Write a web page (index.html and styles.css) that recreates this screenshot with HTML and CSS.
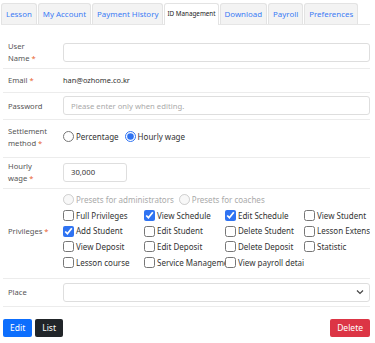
FILE: index.html
```html
<!DOCTYPE html>
<html lang="en">
<head>
    <meta charset="UTF-8">
    <meta name="viewport" content="width=device-width, initial-scale=1.0">
    <title>ID Management</title>
    <link rel="stylesheet" href="styles.css">
</head>
<body>
    <div class="page">
        <!-- tabs -->
        <ul class="tabs">
            <li class="tab"><a href="#">Lesson</a></li>
            <li class="tab"><a href="#">My Account</a></li>
            <li class="tab"><a href="#">Payment History</a></li>
            <li class="tab active"><a href="#">ID Management</a></li>
            <li class="tab"><a href="#">Download</a></li>
            <li class="tab"><a href="#">Payroll</a></li>
            <li class="tab"><a href="#">Preferences</a></li>
        </ul>

        <!-- form -->
        <form class="form">
            <div class="row row-name">
                <label class="label">User Name&nbsp;<span class="req">*</span></label>
                <div class="field"><input class="input" type="text"></div>
            </div>
            <div class="row row-email">
                <label class="label">Email&nbsp;<span class="req">*</span></label>
                <div class="field email">han@ozhome.co.kr</div>
            </div>
            <div class="row row-pass">
                <label class="label">Password</label>
                <div class="field"><input class="input" type="password" placeholder="Please enter only when editing."></div>
            </div>
            <div class="row row-settle">
                <label class="label">Settlement method&nbsp;<span class="req">*</span></label>
                <div class="field radios">
                    <label class="opt"><input type="radio" name="settle"> Percentage</label>
                    <label class="opt"><input type="radio" name="settle" checked> Hourly wage</label>
                </div>
            </div>
            <div class="row row-wage">
                <label class="label">Hourly wage&nbsp;<span class="req">*</span></label>
                <div class="field"><input class="input input-short" type="text" value="30,000"></div>
            </div>
            <div class="row row-priv">
                <label class="label">Privileges&nbsp;<span class="req">*</span></label>
                <div class="field">
                    <div class="presets">
                        <label class="opt"><input type="radio" disabled> Presets for administrators</label>
                        <label class="opt"><input type="radio" disabled> Presets for coaches</label>
                    </div>
                    <div class="checks">
                        <label class="opt"><input type="checkbox"> Full Privileges</label>
                        <label class="opt"><input type="checkbox" checked> View Schedule</label>
                        <label class="opt"><input type="checkbox" checked> Edit Schedule</label>
                        <label class="opt"><input type="checkbox"> View Student</label>
                        <label class="opt"><input type="checkbox" checked> Add Student</label>
                        <label class="opt"><input type="checkbox"> Edit Student</label>
                        <label class="opt"><input type="checkbox"> Delete Student</label>
                        <label class="opt"><input type="checkbox"> Lesson Extension</label>
                        <label class="opt"><input type="checkbox"> View Deposit</label>
                        <label class="opt"><input type="checkbox"> Edit Deposit</label>
                        <label class="opt"><input type="checkbox"> Delete Deposit</label>
                        <label class="opt"><input type="checkbox"> Statistic</label>
                        <label class="opt"><input type="checkbox"> Lesson course</label>
                        <label class="opt"><input type="checkbox"> Service Management</label>
                        <label class="opt"><input type="checkbox"> View payroll details</label>
                    </div>
                </div>
            </div>
            <div class="row row-place">
                <label class="label">Place</label>
                <div class="field">
                    <select class="input select"><option></option></select>
                </div>
            </div>

            <div class="actions">
                <button type="button" class="btn btn-blue">Edit</button>
                <button type="button" class="btn btn-dark">List</button>
                <button type="button" class="btn btn-red right">Delete</button>
            </div>
        </form>
    </div>
</body>
</html>
```

FILE: styles.css
```css
* {
    margin: 0;
    padding: 0;
    box-sizing: border-box;
}

body {
    font-family: 'Noto Sans', sans-serif;
    font-size: 7.6px;
    color: #333;
    background: #fff;
}

.page {
    width: 375px;
    padding: 3px 5px 0 3px;
}

/* tabs */
.tabs {
    list-style: none;
    display: flex;
    gap: 1px;
    margin-left: -2px;
    border-bottom: 1px solid #e6e6e6;
    white-space: nowrap;
}

.tab a {
    display: block;
    height: 21px;
    line-height: 20px;
    padding: 0 4px;
    font-size: 7.9px;
    color: #3b7bf5;
    text-decoration: none;
    background: #f3f3f3;
    border: 1px solid #e3e3e3;
    border-bottom: none;
    border-radius: 3px 3px 0 0;
}

.tab.active a {
    background: #fff;
    color: #222;
    font-size: 6.3px;
    padding: 0 2px;
    margin-bottom: -1px;
    height: 22px;
}

/* form rows */
.form {
    margin-top: 4px;
}

.row {
    display: grid;
    grid-template-columns: 55px 1fr;
    align-items: center;
    border-bottom: 1px solid #ececec;
    padding-left: 5px;
}

.label {
    color: #555;
    line-height: 12px;
    padding-right: 10px;
}

.req {
    color: #e8622c;
}

.field {
    color: #333;
}

.email {
    font-size: 7.4px;
}

.input {
    display: block;
    width: 100%;
    height: 19px;
    border: 1px solid #dedede;
    border-radius: 3px;
    padding: 0 7px;
    font-family: inherit;
    font-size: 7.7px;
    color: #333;
    background: #fff;
    outline: none;
}

.input::placeholder {
    color: #aaa;
}

.input-short {
    width: 64px;
}

.select {
    appearance: none;
    background-image: url("data:image/svg+xml,%3Csvg xmlns='http://www.w3.org/2000/svg' width='8' height='6' viewBox='0 0 8 6'%3E%3Cpath d='M1 1.5l3 3 3-3' fill='none' stroke='%23444' stroke-width='1.2'/%3E%3C/svg%3E");
    background-repeat: no-repeat;
    background-position: right 5px center;
}

.row-name { padding-top: 11px; padding-bottom: 4px; }
.row-email { padding-top: 5px; padding-bottom: 6px; }
.row-pass { padding-top: 3px; padding-bottom: 4px; }
.row-settle { padding-top: 5px; padding-bottom: 8px; }
.row-wage { padding-top: 2px; padding-bottom: 4px; }
.row-priv { padding-top: 3px; padding-bottom: 7px; }
.row-place { padding-top: 4px; padding-bottom: 4px; }

/* radios & checkboxes */
.opt {
    display: inline-flex;
    align-items: center;
    gap: 2px;
    white-space: nowrap;
    color: #333;
    font-size: 8px;
    line-height: 15.7px;
}

.opt input {
    width: 11px;
    height: 11px;
    margin: 0;
    flex-shrink: 0;
    accent-color: #2f73f2;
}

.radios {
    display: flex;
    gap: 6px;
}

.presets {
    display: flex;
    gap: 5px;
}

.presets .opt {
    color: #aaa;
}

.checks {
    display: grid;
    grid-template-columns: 81px 81px 79px 1fr;
    overflow: hidden;
}

.checks .opt {
    overflow: hidden;
}

/* buttons */
.actions {
    display: flex;
    gap: 3px;
    margin-top: 12px;
}

.btn {
    height: 18px;
    padding: 0 7px;
    border: none;
    border-radius: 2px;
    font-family: inherit;
    font-size: 8.5px;
    color: #fff;
}

.btn-blue { background: #0d6efd; }
.btn-dark { background: #212529; }
.btn-red { background: #dc3545; }

.right {
    margin-left: auto;
}
```
